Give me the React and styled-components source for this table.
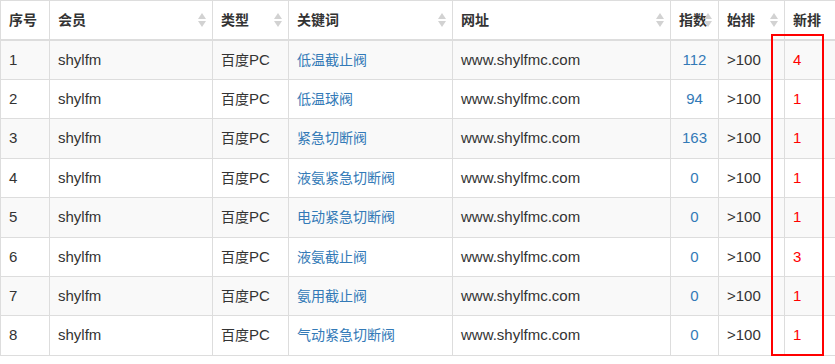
import styled, { createGlobalStyle } from "styled-components";

const GlobalStyle = createGlobalStyle`
  body {
    margin: 0;
    background: #fff;
    font-family: "Liberation Sans", Arial, "Noto Sans CJK SC", sans-serif;
    color: #333;
  }
`;

const Wrapper = styled.div`
  position: relative;
  width: 835px;
`;

const Table = styled.table`
  width: 835px;
  border-collapse: collapse;
  table-layout: fixed;
  border: 1px solid #ddd;
  font-size: 15px;
`;

const Th = styled.th`
  position: relative;
  height: 39px;
  box-sizing: border-box;
  padding: 0 8px;
  text-align: left;
  font-weight: bold;
  border: 1px solid #ddd;
  border-bottom: 2px solid #ddd;
  vertical-align: middle;
  white-space: nowrap;
  line-height: 20px;
`;

const Row = styled.tr`
  background: ${(p) => (p.$striped ? "#f9f9f9" : "#fff")};
`;

const Td = styled.td`
  padding: 8px 8px;
  line-height: 22.4px;
  border: 1px solid #ddd;
  vertical-align: middle;
  white-space: nowrap;
  text-align: ${(p) => p.$align || "left"};
  color: ${(p) => p.$color || "#333"};
`;

// chinese glyphs in the original render a bit smaller than the latin ones
const Cjk = styled.span`
  font-size: 14px;
`;

const Link = styled.a`
  color: #337ab7;
  text-decoration: none;
`;

const SortIcon = styled.svg`
  position: absolute;
  right: 6px;
  top: 50%;
  margin-top: -7px;
`;

const Highlight = styled.div`
  position: absolute;
  left: 771px;
  top: 34px;
  width: 53px;
  height: 322px;
  box-sizing: border-box;
  border: 2px solid #f00;
  pointer-events: none;
`;

const columns = [
  { label: "序号", width: 49 },
  { label: "会员", width: 163, sort: true },
  { label: "类型", width: 76, sort: true },
  { label: "关键词", width: 164, sort: true },
  { label: "网址", width: 218, sort: true },
  { label: "指数", width: 48, sort: true },
  { label: "始排", width: 66, sort: true },
  { label: "新排", width: 51 },
];

const rows = [
  ["低温截止阀", 112, 4],
  ["低温球阀", 94, 1],
  ["紧急切断阀", 163, 1],
  ["液氨紧急切断阀", 0, 1],
  ["电动紧急切断阀", 0, 1],
  ["液氨截止阀", 0, 3],
  ["氨用截止阀", 0, 1],
  ["气动紧急切断阀", 0, 1],
];

function Sort() {
  return (
    <SortIcon width="8" height="14" viewBox="0 0 8 14">
      <polygon points="4,0 8,6 0,6" fill="#d2d2d2" />
      <polygon points="0,8 8,8 4,14" fill="#d2d2d2" />
    </SortIcon>
  );
}

export default function App() {
  return (
    <Wrapper>
      <GlobalStyle />
      <Table>
        <colgroup>
          {columns.map((c) => (
            <col key={c.label} style={{ width: c.width }} />
          ))}
        </colgroup>
        <thead>
          <tr>
            {columns.map((c) => (
              <Th key={c.label}>
                <Cjk>{c.label}</Cjk>
                {c.sort && <Sort />}
              </Th>
            ))}
          </tr>
        </thead>
        <tbody>
          {rows.map(([keyword, index, rank], i) => (
            <Row key={i} $striped={i % 2 === 0}>
              <Td>{i + 1}</Td>
              <Td>shylfm</Td>
              <Td>
                <Cjk>百度</Cjk>PC
              </Td>
              <Td>
                <Link href="#">
                  <Cjk>{keyword}</Cjk>
                </Link>
              </Td>
              <Td>www.shylfmc.com</Td>
              <Td $align="center">
                <Link href="#">{index}</Link>
              </Td>
              <Td>&gt;100</Td>
              <Td $color="#f00">{rank}</Td>
            </Row>
          ))}
        </tbody>
      </Table>
      <Highlight />
    </Wrapper>
  );
}
